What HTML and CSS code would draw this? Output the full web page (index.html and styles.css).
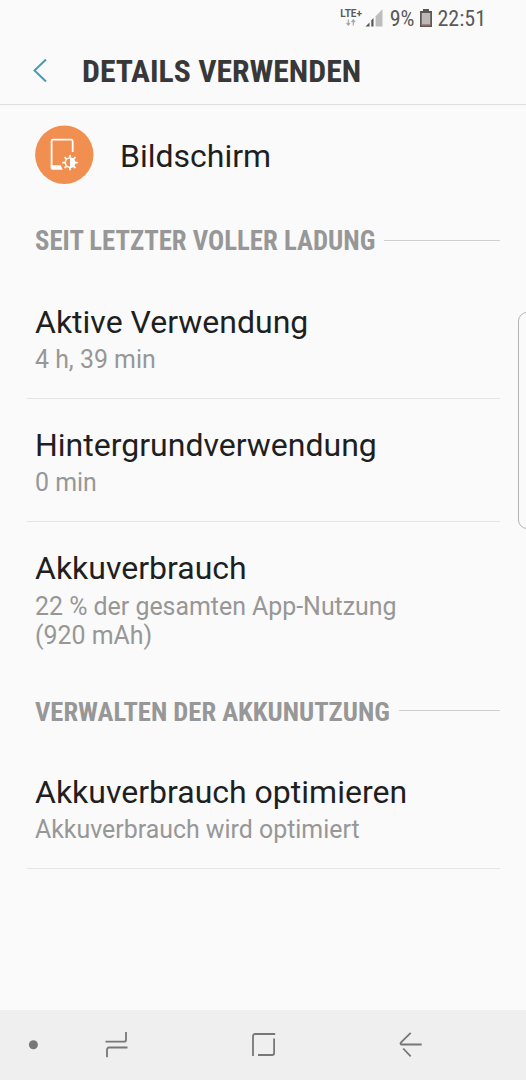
FILE: index.html
```html
<!DOCTYPE html>
<html lang="de">
<head>
  <meta charset="UTF-8">
  <meta name="viewport" content="width=device-width, initial-scale=1">
  <title>Details verwenden</title>
  <link rel="stylesheet" href="styles.css">
</head>
<body>

<div class="screen">
  <div class="status-bar">
    <div class="network">
      <span class="lte">LTE+</span>
      <svg width="12" height="7" viewBox="0 0 12 7" fill="none" stroke="#aaa" stroke-width="1.3">
        <path d="M3.3 0.5v5.5M1.5 4l1.8 2 1.8-2M8.3 6.5V1M6.5 3l1.8-2 1.8 2"/>
      </svg>
    </div>
    <svg class="signal" width="18" height="18" viewBox="0 0 18 18">
      <path d="M0.5 17.5l4-4v4zM6.3 17.5v-6.2l2.2-2.2v8.4z" fill="#555"/>
      <path d="M10.6 17.5V7.2L17.5 0.3v17.2z" fill="#bdbdbd"/>
    </svg>
    <span class="percent">9%</span>
    <svg class="battery" width="12" height="18" viewBox="0 0 12 18">
      <path d="M3 0h6v2h3v16H0V2h3z" fill="#5c5655"/>
      <path d="M1.7 4h8.6v12H1.7z" fill="#bab8b8"/>
      <path d="M1.7 15h8.6v1.6H1.7z" fill="#a8817c"/>
    </svg>
    <span class="clock">22:51</span>
  </div>

  <header class="header">
    <svg class="back" width="16" height="26" viewBox="0 0 16 26" fill="none" stroke="#4a9ab5" stroke-width="2">
      <path d="M14 1.5L2.5 12.5l11.5 11"/>
    </svg>
    <h1>DETAILS VERWENDEN</h1>
  </header>

  <main>
    <div class="app">
      <svg width="60" height="60" viewBox="0 0 60 60">
        <circle cx="30.3" cy="29.7" r="29.2" fill="#f08f50"/>
        <path d="M38.7 27V16.2a1.5 1.5 0 0 0-1.5-1.5H19.1a1.5 1.5 0 0 0-1.5 1.5V42" fill="none" stroke="#fff" stroke-width="1.8"/>
        <path d="M16.7 40.2h10l2 4.6H18.5a1.8 1.8 0 0 1-1.8-1.8z" fill="#fff"/>
        <g transform="translate(36 37.6)" stroke="#fff" fill="none">
          <circle r="4.7" stroke-width="1.4"/>
          <path d="M0-4.7a4.7 4.7 0 0 1 0 9.4z" fill="#fff" stroke="none"/>
          <path d="M0-5v-2.7M0 5v2.7M-5 0h-2.7M5 0h2.7M-3.5-3.5l-1.9-1.9M3.5-3.5l1.9-1.9M-3.5 3.5l-1.9 1.9M3.5 3.5l1.9 1.9" stroke-width="1.8"/>
        </g>
      </svg>
      <span>Bildschirm</span>
    </div>

    <h2 class="section first"><span>SEIT LETZTER VOLLER LADUNG</span></h2>
    <div class="item">
      <div class="title">Aktive Verwendung</div>
      <div class="sub">4 h, 39 min</div>
    </div>
    <div class="item">
      <div class="title">Hintergrundverwendung</div>
      <div class="sub">0 min</div>
    </div>
    <div class="item last">
      <div class="title">Akkuverbrauch</div>
      <div class="sub">22 % der gesamten App-Nutzung<br>(920 mAh)</div>
    </div>

    <h2 class="section"><span>VERWALTEN DER AKKUNUTZUNG</span></h2>
    <div class="item">
      <div class="title">Akkuverbrauch optimieren</div>
      <div class="sub">Akkuverbrauch wird optimiert</div>
    </div>
  </main>

  <!-- edge panel handle -->
  <div class="edge-handle"></div>

  <nav class="nav-bar">
    <svg class="dot" width="10" height="10" viewBox="0 0 10 10"><circle cx="5.4" cy="4.7" r="4.5"/></svg>
    <svg class="recents" width="24" height="26" viewBox="0 0 24 26">
      <path d="M0.5 9.7h18.5a2 2 0 0 0 2-2V0M22.5 15.5H4a2 2 0 0 0-2 2v7.7"/>
    </svg>
    <svg class="home" width="24" height="24" viewBox="0 0 24 24">
      <path d="M1 23V3a2 2 0 0 1 2-2h20.2M22.1 5.5v14.5a2 2 0 0 1-2 2H6"/>
    </svg>
    <svg class="return" width="24" height="26" viewBox="0 0 24 26">
      <path d="M22.7 12.5H2.2q-1.2-.8-.4-1.8L11.7 .8M4.2 16.5l7.5 7.8"/>
    </svg>
  </nav>
</div>

</body>
</html>
```

FILE: styles.css
```css
* {
  box-sizing: border-box;
}

body {
  margin: 0;
  font-family: Roboto, sans-serif;
  background: #fafafa;
  color: #1f1f1f;
}

h1, h2 {
  margin: 0;
  font-family: "Roboto Condensed", Roboto, sans-serif;
  font-stretch: condensed;
  font-weight: 700;
  white-space: nowrap;
}

.screen {
  position: relative;
  display: flex;
  flex-direction: column;
  height: 1080px;
  overflow: hidden;
}

.status-bar {
  display: flex;
  justify-content: flex-end;
  align-items: center;
  height: 36px;
  padding-right: 40px;
  font-family: "Roboto Condensed", Roboto, sans-serif;
  font-stretch: condensed;
  font-size: 22px;
  color: #5a5a5a;
}

.network {
  display: flex;
  flex-direction: column;
  align-items: center;
  width: 23px;
  margin-bottom: 1px;
}

.lte {
  font-family: Roboto, sans-serif;
  font-stretch: normal;
  font-size: 10px;
  font-weight: 700;
  line-height: 10px;
}

.signal {
  margin: 0 7px 0 2px;
}

.battery {
  margin: 0 5px 0 6px;
}

.header {
  display: flex;
  align-items: center;
  height: 69px;
  padding: 2px 0 0 32px;
  border-bottom: 1px solid #dedede;
}

.header h1 {
  margin-left: 34px;
  font-size: 31.7px;
  color: #383838;
}

main {
  flex: 1;
  padding: 0 26px 0 27px;
}

.app {
  display: flex;
  align-items: center;
  height: 100px;
  padding-left: 7px;
  gap: 26px;
  font-size: 32px;
}

.app span {
  padding-top: 2px;
}

.section {
  display: flex;
  align-items: center;
  height: 72px;
  padding-left: 8px;
  font-size: 26.6px;
  color: #979797;
}

.section span {
  padding-top: 2px;
}

.section.first {
  height: 71px;
  font-size: 26.75px;
}

.section.first span {
  padding-top: 0;
}

.section::after {
  content: "";
  flex: 1;
  height: 1px;
  margin-left: 9px;
  background: #cfcfcf;
}

.item {
  padding: 27px 8px 24px;
  border-bottom: 1px solid #e4e4e4;
}

.item.last {
  border-bottom: 0;
}

.item.last .sub {
  padding-top: 1px;
}

.title {
  font-size: 32px;
  line-height: 38px;
}

.sub {
  margin-top: 4px;
  font-size: 24.9px;
  line-height: 29px;
  color: #979797;
}

.edge-handle {
  position: absolute;
  top: 312px;
  right: -10px;
  width: 18px;
  height: 217px;
  border: 1px solid #b5b5b5;
  border-radius: 9px;
}

.nav-bar {
  display: flex;
  align-items: center;
  height: 70px;
  padding-left: 28px;
  background: #efefef;
}

.nav-bar svg {
  fill: none;
  stroke: #777;
  stroke-width: 1.8;
}

.nav-bar .dot {
  fill: #777;
  stroke: none;
}

.recents {
  margin-left: 67px;
}

.home {
  margin-left: 123px;
}

.return {
  margin-left: 123px;
}
```
